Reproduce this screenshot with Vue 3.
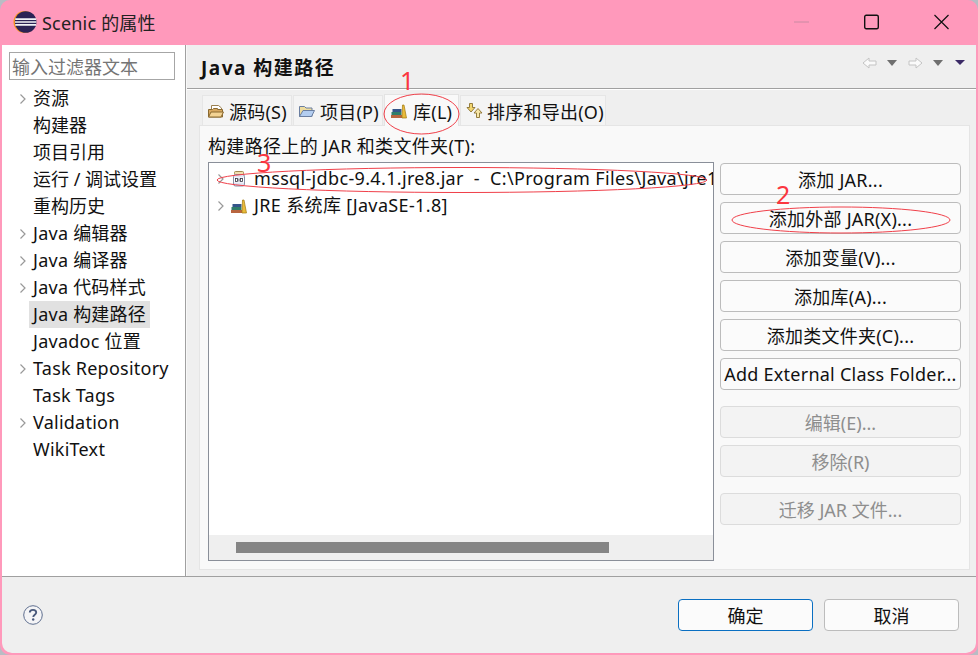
<script setup>
const hasLatin = (s) => /[A-Za-z]/.test(s)

const navItems = [
  { label: '资源', arrow: true },
  { label: '构建器' },
  { label: '项目引用' },
  { label: '运行 / 调试设置' },
  { label: '重构历史' },
  { label: 'Java 编辑器', arrow: true },
  { label: 'Java 编译器', arrow: true },
  { label: 'Java 代码样式', arrow: true },
  { label: 'Java 构建路径', selected: true },
  { label: 'Javadoc 位置' },
  { label: 'Task Repository', arrow: true },
  { label: 'Task Tags' },
  { label: 'Validation', arrow: true },
  { label: 'WikiText' },
]

const addButtons = ['添加 JAR...', '添加外部 JAR(X)...', '添加变量(V)...', '添加库(A)...', '添加类文件夹(C)...', 'Add External Class Folder...']
</script>

<template>
  <div class="window">
    <header class="titlebar">
      <svg class="logo" width="24" height="24" viewBox="0 0 24 24">
        <circle cx="11.500" cy="12" r="11" fill="#f7941e" />
        <circle cx="12.700" cy="12" r="10.800" fill="#2c2255" />
        <path d="M2.200 9.200h21M2 12h21.400M2.200 14.800h21" stroke="#f2f2f6" stroke-width="1.700" />
      </svg>
      <span class="title">Scenic 的属性</span>
      <div class="winbtns">
        <svg width="15" height="16" viewBox="0 0 15 16"><path d="M0 8h15" stroke="#c98aa2" stroke-width="1" /></svg>
        <svg width="15" height="16" viewBox="0 0 15 16"><rect x=".7" y="1.200" width="13.600" height="13.600" rx="1.500" fill="none" stroke="#111" stroke-width="1.400" /></svg>
        <svg width="15" height="16" viewBox="0 0 15 16"><path d="M.5 1l14 14M14.500 1L.5 15" stroke="#111" stroke-width="1.200" /></svg>
      </div>
    </header>

    <div class="body">
      <aside class="sidebar">
        <div class="filter">输入过滤器文本</div>
        <ul class="nav">
          <li v-for="item in navItems" :key="item.label" class="nav-row">
            <svg v-if="item.arrow" class="chev" width="8" height="12" viewBox="0 0 8 12"><path d="M1.500 1.500L6 6l-4.500 4.500" fill="none" stroke="#999" stroke-width="1.200" /></svg>
            <span class="nav-label" :class="{ selected: item.selected, wide: hasLatin(item.label) }">{{ item.label }}</span>
          </li>
        </ul>
      </aside>

      <main class="main">
        <div class="page-head">
          <h1>Java 构建路径</h1>
          <div class="nav-tools">
            <svg width="15" height="12" viewBox="0 0 15 12"><path d="M1 6l6-5v3h7v4H7v3z" fill="#fafafa" stroke="#c4c4c4" /></svg>
            <i class="tri"></i>
            <svg class="fwd" width="15" height="12" viewBox="0 0 15 12"><path d="M14 6L8 1v3H1v4h7v3z" fill="#fafafa" stroke="#c4c4c4" /></svg>
            <i class="tri"></i>
            <i class="tri dark"></i>
          </div>
        </div>

        <div class="content">
          <div class="tabs">
            <div class="tab t1">
              <svg width="16" height="16" viewBox="0 0 16 16"><path d="M3.500 7V2.500h7l3 2.500v3" fill="#fff" stroke="#9a8050" /><path d="M.5 14V6.500h4l1-1h4v1h5V14z" fill="#d8a860" stroke="#8a6a30" /><path d="M.5 14l2.500-5h12.500L13 14z" fill="#f3d394" stroke="#8a6a30" /></svg>
              <span class="wide">源码(S)</span>
            </div>
            <div class="tab t2">
              <svg width="16" height="16" viewBox="0 0 16 16"><path d="M.5 13.500V3.500h5l1.500 1.500h6v8.500z" fill="#eedc9e" stroke="#6a7ea0" /><path d="M.5 13.500L4 7.500h11.500l-3 6z" fill="#b3cdf0" stroke="#6a7ea0" /></svg>
              <span class="wide">项目(P)</span>
            </div>
            <div class="tab t3 active">
              <svg width="16" height="16" viewBox="0 0 16 16"><rect x="0" y="12" width="11" height="3" fill="#b8653f" /><rect x=".5" y="9" width="10" height="3" fill="#2f7d6a" /><rect x="1.500" y="6" width="9" height="3" fill="#34558a" /><path d="M11 15l.5-13h1.500l2.500 13z" fill="#eabb3a" stroke="#a07a10" stroke-width=".7" /></svg>
              <span class="wide">库(L)</span>
            </div>
            <div class="tab t4">
              <svg width="17" height="17" viewBox="0 0 17 17"><path d="M5 10L1 5.500h2.500V1.500h3v4H9z" fill="#f2d670" stroke="#8a7030" stroke-width=".9" /><path d="M12 6.500l4 4.500h-2.500v4.500h-3V11H8z" fill="#f8e7a8" stroke="#8a7030" stroke-width=".9" /></svg>
              <span class="wide">排序和导出(O)</span>
            </div>
          </div>

          <div class="panel">
            <div class="panel-label">构建路径上的 JAR 和类文件夹(T):</div>
            <div class="panel-row">
              <div class="tree">
                <div class="tree-rows">
                  <div class="tree-row">
                    <svg class="chev" width="8" height="12" viewBox="0 0 8 12"><path d="M1.500 1.500L6 6l-4.500 4.500" fill="none" stroke="#999" stroke-width="1.200" /></svg>
                    <svg class="ticon" width="16" height="16" viewBox="0 0 16 16"><rect x="3.500" y=".5" width="9" height="3" rx="1" fill="#f2dfb0" stroke="#a08a50" /><rect x="2.500" y="3.500" width="11" height="11.500" rx="2" fill="#dfe4f4" stroke="#8a8fa5" /><rect x="3" y="6.500" width="10" height="5" fill="#fff" /><path d="M8 7.500v3" stroke="#334" stroke-width=".9" /><rect x="4.500" y="7.500" width="2" height="3" fill="none" stroke="#334" stroke-width=".8" /><rect x="9.500" y="7.500" width="2" height="3" fill="none" stroke="#334" stroke-width=".8" /></svg>
                    <span class="jar">mssql-jdbc-9.4.1.jre8.jar&nbsp; -&nbsp; C:\Program Files\Java\jre1.8.0_301\bin</span>
                  </div>
                  <div class="tree-row">
                    <svg class="chev" width="8" height="12" viewBox="0 0 8 12"><path d="M1.500 1.500L6 6l-4.500 4.500" fill="none" stroke="#999" stroke-width="1.200" /></svg>
                    <svg class="ticon" width="16" height="16" viewBox="0 0 16 16"><rect x="0" y="12" width="11" height="3" fill="#b8653f" /><rect x=".5" y="9" width="10" height="3" fill="#2f7d6a" /><rect x="1.500" y="6" width="9" height="3" fill="#34558a" /><path d="M11 15l.5-13h1.500l2.500 13z" fill="#eabb3a" stroke="#a07a10" stroke-width=".7" /></svg>
                    <span class="jre">JRE 系统库 [JavaSE-1.8]</span>
                  </div>
                </div>
                <div class="hscroll"><div class="thumb"></div></div>
              </div>

              <div class="btncol">
                <div class="btngroup">
                  <button v-for="b in addButtons" :key="b" class="btn wide">{{ b }}</button>
                </div>
                <div class="btngroup">
                  <button class="btn" disabled>编辑(E)...</button>
                  <button class="btn" disabled>移除(R)</button>
                </div>
                <div class="btngroup">
                  <button class="btn" disabled>迁移 JAR 文件...</button>
                </div>
              </div>
            </div>
          </div>
        </div>
      </main>
    </div>

    <footer class="footer">
      <svg width="20" height="20" viewBox="0 0 20 20">
        <circle cx="10" cy="10" r="9.300" fill="#f4f4f6" stroke="#5f6f8f" stroke-width="1" />
        <path d="M6.800 7.600C6.800 5.800 8.200 4.900 10 4.900c1.900 0 3.200 1 3.200 2.600 0 2.300-2.900 2.300-2.900 4.500" fill="none" stroke="#4a5a7c" stroke-width="1.900" />
        <circle cx="10.200" cy="14.500" r="1.200" fill="#4a5a7c" />
      </svg>
      <div class="footer-btns">
        <button class="btn fbtn primary">确定</button>
        <button class="btn fbtn">取消</button>
      </div>
    </footer>

    <!-- 红色标注，盖在截图上 -->
    <svg class="marks" width="978" height="655" viewBox="0 0 978 655">
      <ellipse cx="421.500" cy="114" rx="37.500" ry="20" />
      <ellipse cx="462" cy="180" rx="245" ry="12.500" />
      <ellipse cx="841" cy="220" rx="109" ry="13" />
      <text x="400" y="90">1</text>
      <text x="257" y="172">3</text>
      <text x="776" y="204">2</text>
    </svg>
  </div>
</template>

<style>
html,
body {
  margin: 0;
  background: #b8bcc4;
}
</style>

<style scoped>
.window {
  position: relative;
  width: 978px;
  height: 655px;
  box-sizing: border-box;
  display: flex;
  flex-direction: column;
  background: #ff99bb;
  border: 2px solid #ff99bb;
  border-top: 0;
  border-radius: 10px;
  overflow: hidden;
  color: #111;
  font-family: "Noto Sans", "Noto Sans CJK SC", sans-serif;
  font-size: 18px;
}

.wide {
  letter-spacing: 0.24px;
}

.titlebar {
  height: 45px;
  flex: none;
  display: flex;
  align-items: center;
  padding: 0 0 2px 11px;
  box-sizing: border-box;
}

.title {
  margin-left: 5px;
  font-size: 18px;
  letter-spacing: 0.2px;
  color: #222;
}

.winbtns {
  margin-left: auto;
  display: flex;
  gap: 55px;
  padding-right: 27px;
}

.body {
  flex: 1;
  min-height: 0;
  display: flex;
  border-bottom: 1px solid #a0a0a0;
  box-shadow: 0 1px 0 #fff;
}

.sidebar {
  width: 176px;
  flex: none;
  background: #fff;
  border-right: 1px solid #a0a0a0;
  padding: 7px 0 0 7px;
}

.filter {
  width: 166px;
  height: 28px;
  box-sizing: border-box;
  border: 1px solid #a6a6a6;
  color: #757575;
  line-height: 28px;
  padding-left: 2px;
}

.nav {
  list-style: none;
  margin: 5px 0 0;
  padding: 0;
}

.nav-row {
  position: relative;
  height: 27px;
  line-height: 27px;
  padding-left: 20px;
}

.nav-row .chev {
  position: absolute;
  left: 10px;
  top: 8px;
}

.nav-label {
  display: inline-block;
  height: 27px;
  padding: 0 4px;
}

.nav-label.selected {
  background: #e1e1e1;
}

.main {
  flex: 1;
  background: #efefef;
  border-left: 1px solid #f8f8f8;
  display: flex;
  flex-direction: column;
}

.page-head {
  height: 44px;
  flex: none;
  box-sizing: border-box;
  border-bottom: 1px solid #a0a0a0;
  box-shadow: 0 1px 0 #fff;
  display: flex;
  align-items: center;
  padding: 0 12px 0 14px;
}

.page-head h1 {
  margin: 0;
  font-size: 19px;
  font-weight: 700;
  letter-spacing: 1.500px;
  color: #111;
}

.nav-tools {
  margin-left: auto;
  display: flex;
  align-items: center;
  gap: 10px;
  margin-bottom: 8px;
}

.nav-tools .fwd {
  margin-left: 1px;
}

.tri {
  width: 0;
  height: 0;
  border-left: 5.500px solid transparent;
  border-right: 5.500px solid transparent;
  border-top: 6px solid #6f6f6f;
}

.tri.dark {
  margin-left: 2px;
  border-left-width: 5px;
  border-right-width: 5px;
  border-top: 5px solid #3b2a66;
}

.content {
  flex: 1;
  min-height: 0;
  padding: 5px 7px 6px 12px;
  display: flex;
  flex-direction: column;
}

.tabs {
  display: flex;
  padding-left: 3px;
  height: 31px;
  flex: none;
  align-items: flex-end;
}

.tab {
  height: 30px;
  box-sizing: border-box;
  display: flex;
  align-items: center;
  gap: 5px;
  padding-left: 5px;
  background: #f4f4f4;
  border: 1px solid #e6e6e6;
  border-bottom: 0;
  margin-right: 1px;
  white-space: nowrap;
}

.tab.active {
  height: 32px;
  background: #f9f9f9;
  margin-bottom: -1px;
  position: relative;
  border-color: #e3e3e3;
  gap: 6px;
  padding-left: 6px;
}

.t1 { width: 90px; }
.t2 { width: 90px; }
.t3 { width: 75px; }
.t4 { width: 146px; gap: 4px; }

.panel {
  flex: 1;
  min-height: 0;
  background: #f9f9f9;
  border: 1px solid #e5e5e5;
  padding: 8px;
  display: flex;
  flex-direction: column;
}

.panel-label {
  height: 28px;
  line-height: 24px;
  flex: none;
  letter-spacing: 0.34px;
}

.panel-row {
  flex: 1;
  min-height: 0;
  display: flex;
  gap: 6px;
}

.tree {
  width: 506px;
  flex: none;
  box-sizing: border-box;
  border: 1px solid #8a8f99;
  background: #fff;
  display: flex;
  flex-direction: column;
  overflow: hidden;
}

.tree-rows {
  flex: 1;
  padding-top: 2px;
  overflow: hidden;
}

.tree-row {
  position: relative;
  height: 27px;
  line-height: 27px;
  display: flex;
  align-items: center;
  white-space: nowrap;
  padding-left: 8px;
}

.tree-row .chev {
  flex: none;
}

.tree-row .ticon {
  flex: none;
  margin: 0 7px 0 6px;
}

.jar {
  letter-spacing: 0.34px;
}

.jre {
  letter-spacing: 0.36px;
}

.hscroll {
  height: 25px;
  flex: none;
  background: #efefef;
  padding: 7px 0 0 27px;
  box-sizing: border-box;
}

.thumb {
  width: 373px;
  height: 11px;
  background: #858585;
}

.btncol {
  flex: 1;
  display: flex;
  flex-direction: column;
  gap: 16px;
  margin-top: 1px;
}

.btngroup {
  display: flex;
  flex-direction: column;
  gap: 7px;
}

.btn {
  height: 32px;
  width: 241px;
  box-sizing: border-box;
  border: 1px solid #bcbcbc;
  border-radius: 4px;
  background: #fbfbfb;
  color: #111;
  font-family: inherit;
  font-size: 18px;
  padding: 0 0 1px;
  white-space: nowrap;
}

.btn:disabled {
  background: #f3f3f3;
  border-color: #dcdcdc;
  color: #8e8e8e;
}

.footer {
  height: 76px;
  flex: none;
  background: #efefef;
  display: flex;
  align-items: center;
  padding: 0 17px 0 21px;
  border-radius: 0 0 10px 10px;
}

.footer-btns {
  margin-left: auto;
  display: flex;
  gap: 11px;
}

.fbtn {
  width: 135px;
}

.fbtn.primary {
  border-color: #0a6fc2;
}

.marks {
  position: absolute;
  left: -2px;
  top: 0;
  pointer-events: none;
}

.marks ellipse {
  fill: none;
  stroke: #f0404a;
  stroke-width: 1;
}

.marks text {
  fill: #fb3640;
  font-family: "Noto Sans", sans-serif;
  font-size: 25px;
}
</style>
